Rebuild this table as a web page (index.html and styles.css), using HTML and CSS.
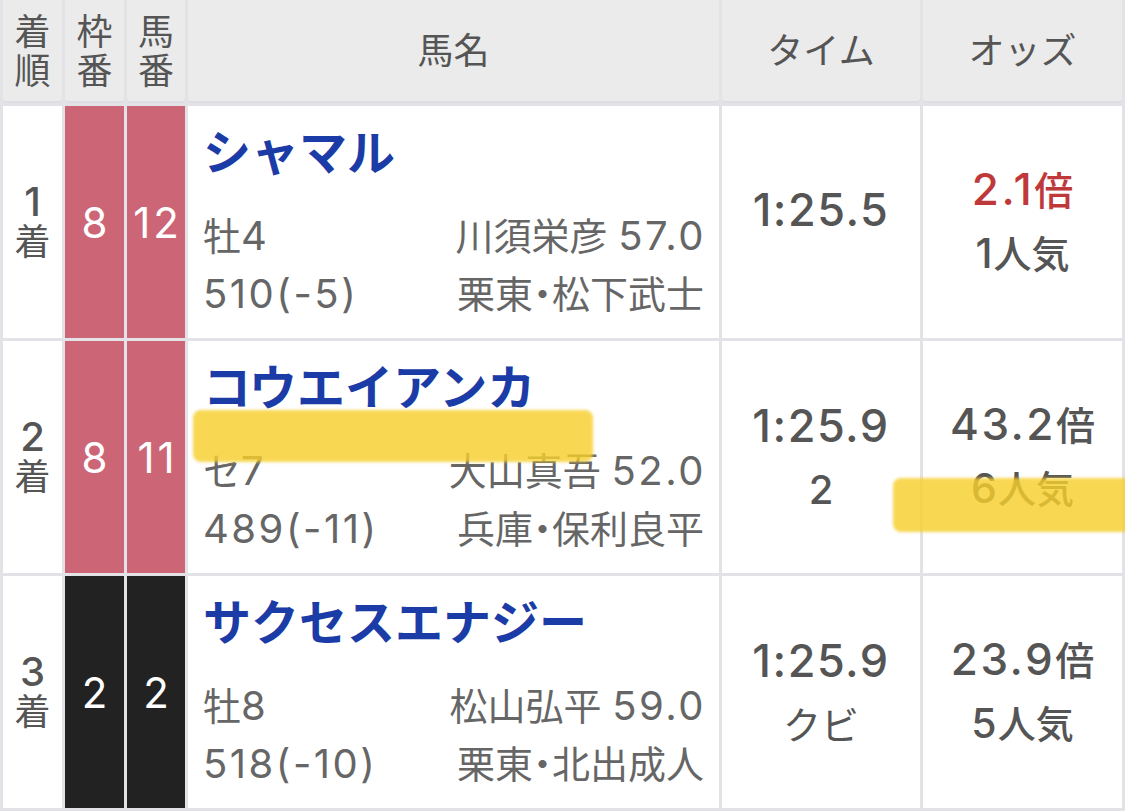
FILE: index.html
```html
<!DOCTYPE html>
<html lang="ja">
<head>
<meta charset="utf-8">
<title>レース結果</title>
<link rel="stylesheet" href="styles.css">
</head>
<body>
<div class="page">
  <div class="results">
    <div class="hd hd-stack">着<br>順</div>
    <div class="hd hd-stack">枠<br>番</div>
    <div class="hd hd-stack">馬<br>番</div>
    <div class="hd">馬名</div>
    <div class="hd">タイム</div>
    <div class="hd">オッズ</div>

    <div class="cell rank"><span class="num">1</span><span>着</span></div>
    <div class="cell waku waku-pink"><span class="num">8</span></div>
    <div class="cell waku waku-pink"><span class="num">12</span></div>
    <div class="cell horse">
      <div class="name">シャマル</div>
      <div class="info-row"><span>牡<span class="num">4</span></span><span>川須栄彦 <span class="num end">57.0</span></span></div>
      <div class="info-row"><span class="num">510(-5)</span><span class="trainer">栗東・松下武士</span></div>
    </div>
    <div class="cell time"><div class="num t">1:25.5</div><div class="diff"></div></div>
    <div class="cell odds"><div class="od win"><span class="num">2.1</span>倍</div><div class="pop"><span class="num">1</span>人気</div></div>

    <div class="cell rank"><span class="num">2</span><span>着</span></div>
    <div class="cell waku waku-pink"><span class="num">8</span></div>
    <div class="cell waku waku-pink"><span class="num">11</span></div>
    <div class="cell horse">
      <div class="name">コウエイアンカ</div>
      <div class="info-row"><span>セ<span class="num">7</span></span><span>大山真吾 <span class="num end">52.0</span></span></div>
      <div class="info-row"><span class="num">489(-11)</span><span class="trainer">兵庫・保利良平</span></div>
    </div>
    <div class="cell time"><div class="num t">1:25.9</div><div class="diff"><span class="num">2</span></div></div>
    <div class="cell odds"><div class="od"><span class="num">43.2</span>倍</div><div class="pop"><span class="num">6</span>人気</div></div>

    <div class="cell rank"><span class="num">3</span><span>着</span></div>
    <div class="cell waku waku-black"><span class="num">2</span></div>
    <div class="cell waku waku-black"><span class="num">2</span></div>
    <div class="cell horse">
      <div class="name">サクセスエナジー</div>
      <div class="info-row"><span>牡<span class="num">8</span></span><span>松山弘平 <span class="num end">59.0</span></span></div>
      <div class="info-row"><span class="num">518(-10)</span><span class="trainer">栗東・北出成人</span></div>
    </div>
    <div class="cell time"><div class="num t">1:25.9</div><div class="diff">クビ</div></div>
    <div class="cell odds"><div class="od"><span class="num">23.9</span>倍</div><div class="pop"><span class="num">5</span>人気</div></div>
  </div>
  <div class="marker marker-name"></div>
  <div class="marker marker-pop"></div>
</div>
</body>
</html>
```
FILE: styles.css
```css
* { box-sizing: border-box; }
html, body { margin: 0; padding: 0; background: #ffffff; }
body {
  font-family: "Inter", "Noto Sans CJK JP", sans-serif;
  color: #555555;
  overflow: hidden;
}
.page {
  position: relative;
  width: 1125px;
  height: 811px;
  overflow: hidden;
}
.results {
  display: grid;
  grid-template-columns: 59px 59px 58px 531px 198px 199px;
  grid-template-rows: 103px 232px 232px 232px;
  gap: 3px;
  padding: 0 3px 3px;
  background: #e2e2e7;
  width: 1125px;
}
.hd {
  background: #ebebeb;
  color: #555555;
  font-size: 36px;
  line-height: 39px;
  display: flex;
  align-items: center;
  justify-content: center;
  text-align: center;
  border-radius: 0 0 3px 3px;
  box-shadow: inset 0 -2px 0 #dedee2;
}
.hd-stack { padding-top: 1px; }
.cell {
  background: #ffffff;
  display: flex;
  flex-direction: column;
  align-items: center;
  justify-content: center;
}
.num { font-family: "Inter", "Noto Sans CJK JP", sans-serif; }
.rank {
  font-size: 36px;
  line-height: 40px;
  color: #555555;
}
.rank .num { font-size: 40px; font-weight: 500; }
.waku { color: #ffffff; font-size: 42px; }
.waku .num { letter-spacing: 3px; padding-left: 3px; }
.waku-pink { background: #cc6677; }
.waku-black { background: #222222; }
.horse {
  align-items: stretch;
  justify-content: flex-start;
  padding: 17px 15px 0 15px;
}
.name {
  font-size: 48px;
  line-height: 60px;
  font-weight: 700;
  color: #1b3ca6;
  white-space: nowrap;
  margin-bottom: 24px;
}
.info-row {
  display: flex;
  justify-content: space-between;
  font-size: 38px;
  line-height: 58px;
  color: #666666;
  white-space: nowrap;
}
.info-row .num { font-size: 40px; letter-spacing: 2.5px; }
.info-row .num.end { margin-right: -2px; }
.trainer { font-feature-settings: "palt"; }
.time { color: #555555; }
.time .t { font-size: 45px; line-height: 66px; font-weight: 500; letter-spacing: 1.5px; }
.diff { font-size: 38px; line-height: 62px; }
.diff .num { font-size: 40px; font-weight: 500; }
.diff:empty { height: 24px; }
.odds { color: #555555; }
.od { font-size: 39px; line-height: 63px; font-weight: 500; }
.od .num { font-size: 44px; letter-spacing: 2.5px; }
.od.win { color: #c0393a; }
.pop { font-size: 38px; line-height: 63px; font-weight: 500; }
.pop .num { font-size: 41px; letter-spacing: 1px; }
.marker {
  position: absolute;
  background: rgba(247, 206, 45, 0.82);
  border-radius: 8px;
  filter: blur(1.5px);
}
.marker-name { left: 193px; top: 410px; width: 400px; height: 52px; }
.marker-pop { left: 893px; top: 478px; width: 245px; height: 54px; }
```
